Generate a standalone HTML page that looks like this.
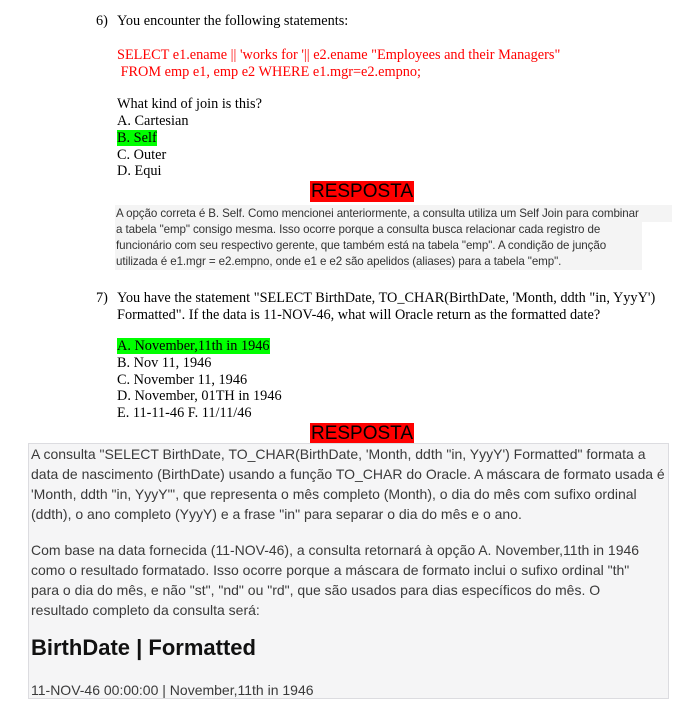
<!DOCTYPE html>
<html><head><meta charset="utf-8"><style>
body{margin:0;width:687px;height:726px;background:#fff;position:relative;overflow:hidden;font-family:"Liberation Serif",serif;}
.t{position:absolute;font-size:14.3px;line-height:17px;white-space:nowrap;color:#000}
.r{color:#f00}
.g{background:#00ff00}
.resp{position:absolute;left:310px;width:104px;height:21px;background:#f00;color:#000;font-family:"Liberation Sans",sans-serif;font-size:19px;line-height:21px;text-align:center}
.s{position:absolute;font-family:"Liberation Sans",sans-serif;white-space:nowrap;color:#333}
</style></head><body>
<div class="t" style="left:96px;top:13px">6)</div>
<div class="t" style="left:117px;top:13px">You encounter the following statements:</div>
<div class="t r" style="left:117px;top:47px">SELECT e1.ename || 'works for '|| e2.ename "Employees and their Managers"</div>
<div class="t r" style="left:117px;top:64px">&nbsp;FROM emp e1, emp e2 WHERE e1.mgr=e2.empno;</div>
<div class="t" style="left:117px;top:96px">What kind of join is this?</div>
<div class="t" style="left:117px;top:113px">A. Cartesian</div>
<div class="t" style="left:117px;top:130px"><span class="g">B. Self</span></div>
<div class="t" style="left:117px;top:147px">C. Outer</div>
<div class="t" style="left:117px;top:163px">D. Equi</div>
<div class="resp" style="top:181px">RESPOSTA</div>
<div style="position:absolute;left:115px;top:205px;width:557px;height:17px;background:#f4f4f4"></div>
<div style="position:absolute;left:115px;top:222px;width:527px;height:48px;background:#f4f4f4"></div>
<div class="s" style="left:116px;top:206px;font-size:11.6px;line-height:16px;letter-spacing:-0.1px">A opção correta é B. Self. Como mencionei anteriormente, a consulta utiliza um Self Join para combinar<br>a tabela "emp" consigo mesma. Isso ocorre porque a consulta busca relacionar cada registro de<br>funcionário com seu respectivo gerente, que também está na tabela "emp". A condição de junção<br>utilizada é e1.mgr = e2.empno, onde e1 e e2 são apelidos (aliases) para a tabela "emp".</div>
<div class="t" style="left:96px;top:290px">7)</div>
<div class="t" style="left:117px;top:290px">You have the statement "SELECT BirthDate, TO_CHAR(BirthDate, 'Month, ddth "in, YyyY')</div>
<div class="t" style="left:117px;top:307px">Formatted". If the data is 11-NOV-46, what will Oracle return as the formatted date?</div>
<div class="t" style="left:117px;top:338px"><span class="g">A. November,11th in 1946</span></div>
<div class="t" style="left:117px;top:355px">B. Nov 11, 1946</div>
<div class="t" style="left:117px;top:372px">C. November 11, 1946</div>
<div class="t" style="left:117px;top:388px">D. November, 01TH in 1946</div>
<div class="t" style="left:117px;top:405px">E. 11-11-46 F. 11/11/46</div>
<div class="resp" style="top:423px">RESPOSTA</div>
<div style="position:absolute;left:28px;top:443px;width:639px;height:254px;background:#f5f5f6;border:1px solid #dcdce0"></div>
<div class="s" style="left:31px;top:444px;font-size:14px;line-height:20px;color:#3a3a3a">A consulta "SELECT BirthDate, TO_CHAR(BirthDate, 'Month, ddth "in, YyyY') Formatted" formata a<br>data de nascimento (BirthDate) usando a função TO_CHAR do Oracle. A máscara de formato usada é<br>'Month, ddth "in, YyyY"', que representa o mês completo (Month), o dia do mês com sufixo ordinal<br>(ddth), o ano completo (YyyY) e a frase "in" para separar o dia do mês e o ano.</div>
<div class="s" style="left:31px;top:540px;font-size:14px;line-height:20px;color:#3a3a3a">Com base na data fornecida (11-NOV-46), a consulta retornará à opção A. November,11th in 1946<br>como o resultado formatado. Isso ocorre porque a máscara de formato inclui o sufixo ordinal "th"<br>para o dia do mês, e não "st", "nd" ou "rd", que são usados para dias específicos do mês. O<br>resultado completo da consulta será:</div>
<div class="s" style="left:31px;top:634px;font-size:22px;line-height:28px;font-weight:bold;color:#111">BirthDate | Formatted</div>
<div class="s" style="left:31px;top:680px;font-size:14px;line-height:20px;color:#3a3a3a">11-NOV-46 00:00:00 | November,11th in 1946</div>
</body></html>
